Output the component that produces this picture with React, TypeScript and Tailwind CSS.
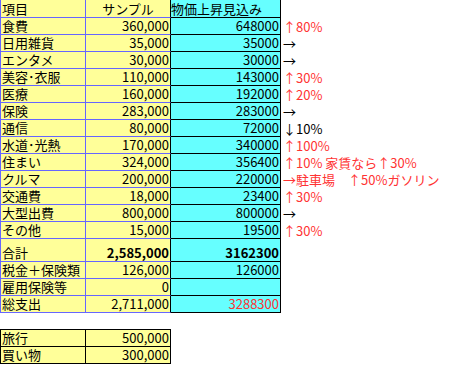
import React from 'react'

type Note = { text: string; red?: boolean }

const rows: [string, string, string, Note | null][] = [
  ['食費', '360,000', '648000', { text: '↑80%', red: true }],
  ['日用雑貨', '35,000', '35000', { text: '→' }],
  ['エンタメ', '30,000', '30000', { text: '→' }],
  ['美容･衣服', '110,000', '143000', { text: '↑30%', red: true }],
  ['医療', '160,000', '192000', { text: '↑20%', red: true }],
  ['保険', '283,000', '283000', { text: '→' }],
  ['通信', '80,000', '72000', { text: '↓10%' }],
  ['水道･光熱', '170,000', '340000', { text: '↑100%', red: true }],
  ['住まい', '324,000', '356400', { text: '↑10% 家賃なら↑30%', red: true }],
  ['クルマ', '200,000', '220000', { text: '→駐車場　↑50%ガソリン', red: true }],
  ['交通費', '18,000', '23400', { text: '↑30%', red: true }],
  ['大型出費', '800,000', '800000', { text: '→' }],
  ['その他', '15,000', '19500', { text: '↑30%', red: true }],
]

const bottomRows: [string, string, string, boolean?][] = [
  ['税金＋保険類', '126,000', '126000'],
  ['雇用保険等', '0', ''],
  ['総支出', '2,711,000', '3288300', true],
]

function Row({
  a,
  b,
  c,
  note,
  tall,
  bold,
  redC,
  center,
}: {
  a: string
  b: string
  c: string
  note?: Note | null
  tall?: boolean
  bold?: boolean
  redC?: boolean
  center?: boolean
}) {
  const h = tall ? 'h-[23px]' : 'h-[17px]'
  return (
    <div className={`flex ${h}`}>
      <div className="flex w-[85px] items-end border-r border-b border-[#6666ff] bg-[#ffff99] pl-[1px]">
        {a}
      </div>
      <div
        className={`flex w-[85px] items-end border-r border-b border-r-black border-b-[#6666ff] bg-[#ffff99] pr-[1px] ${
          center ? 'justify-center' : 'justify-end'
        } ${bold ? 'font-bold' : ''}`}
      >
        {b}
      </div>
      <div
        className={`flex w-[110px] items-end border-r border-b border-black bg-[#66ffff] pr-[1px] ${
          center ? 'justify-start pl-0' : 'justify-end'
        } ${bold ? 'font-bold' : ''} ${redC ? 'text-[#ff3333]' : ''}`}
      >
        {c}
      </div>
      {note && (
        <div
          className={`flex items-end whitespace-nowrap pl-[2px] ${
            note.red ? 'text-[#ff3333]' : 'text-black'
          }`}
        >
          {note.text}
        </div>
      )}
    </div>
  )
}

export default function App() {
  return (
    <div className="h-[365px] w-[451px] overflow-hidden bg-white font-['Noto_Sans_CJK_JP',sans-serif] text-[13px] leading-[16px] text-black">
      <div className="border-l border-[#6666ff]">
        <div className="flex h-[18px]">
          <div className="flex w-[85px] items-end border-r border-b border-[#6666ff] bg-[#ffff99] pl-[1px]">
            項目
          </div>
          <div className="flex w-[85px] items-end justify-center border-r border-b border-r-black border-b-[#6666ff] bg-[#ffff99]">
            サンプル
          </div>
          <div className="flex w-[110px] items-end whitespace-nowrap border-r border-b border-black bg-[#66ffff]">
            物価上昇見込み
          </div>
        </div>
        {rows.map(([a, b, c, note]) => (
          <Row key={a} a={a} b={b} c={c} note={note} />
        ))}
        <Row a="合計" b="2,585,000" c="3162300" tall bold />
        {bottomRows.map(([a, b, c, red]) => (
          <Row key={a} a={a} b={b} c={c} redC={red} />
        ))}
      </div>

      <div className="mt-[16px] w-[171px] border-t border-l border-black">
        {[
          ['旅行', '500,000'],
          ['買い物', '300,000'],
        ].map(([a, b]) => (
          <div key={a} className="flex h-[17px]">
            <div className="flex w-[85px] items-end border-r border-b border-black bg-[#ffff99] pl-[1px]">
              {a}
            </div>
            <div className="flex w-[85px] items-end justify-end border-r border-b border-black bg-[#ffff99] pr-[1px]">
              {b}
            </div>
          </div>
        ))}
      </div>
    </div>
  )
}
